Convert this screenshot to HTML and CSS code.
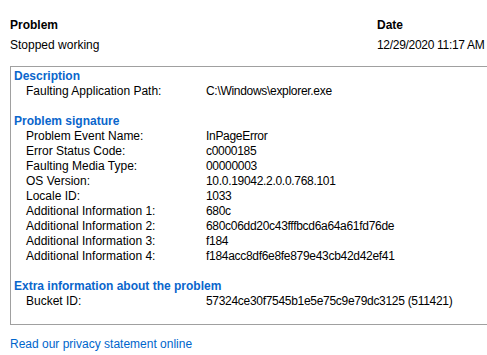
FILE: index.html
```html
<!DOCTYPE html>
<html lang="en">
<head>
    <meta charset="UTF-8">
    <title>Problem Details</title>
    <link rel="stylesheet" href="styles.css">
</head>
<body>
    <div class="summary">
        <div class="summary-col problem-col">
            <div class="col-head">Problem</div>
            <div>Stopped working</div>
        </div>
        <div class="summary-col">
            <div class="col-head">Date</div>
            <div class="value">12/29/2020 11:17 AM</div>
        </div>
    </div>

    <div class="details">
        <div class="section">
            <div class="section-title">Description</div>
            <div class="row"><span class="label">Faulting Application Path:</span><span class="value">C:\Windows\explorer.exe</span></div>
        </div>

        <div class="section">
            <div class="section-title">Problem signature</div>
            <div class="row"><span class="label">Problem Event Name:</span><span class="value">InPageError</span></div>
            <div class="row"><span class="label">Error Status Code:</span><span class="value">c0000185</span></div>
            <div class="row"><span class="label">Faulting Media Type:</span><span class="value">00000003</span></div>
            <div class="row"><span class="label">OS Version:</span><span class="value">10.0.19042.2.0.0.768.101</span></div>
            <div class="row"><span class="label">Locale ID:</span><span class="value">1033</span></div>
            <div class="row"><span class="label">Additional Information 1:</span><span class="value">680c</span></div>
            <div class="row"><span class="label">Additional Information 2:</span><span class="value">680c06dd20c43fffbcd6a64a61fd76de</span></div>
            <div class="row"><span class="label">Additional Information 3:</span><span class="value">f184</span></div>
            <div class="row"><span class="label">Additional Information 4:</span><span class="value">f184acc8df6e8fe879e43cb42d42ef41</span></div>
        </div>

        <div class="section">
            <div class="section-title">Extra information about the problem</div>
            <div class="row"><span class="label">Bucket ID:</span><span class="value">57324ce30f7545b1e5e75c9e79dc3125 (511421)</span></div>
        </div>
    </div>

    <a class="privacy-link" href="#">Read our privacy statement online</a>
</body>
</html>
```

FILE: styles.css
```css
body {
    font-family: 'Liberation Sans', Arial, sans-serif;
    font-size: 12px;
    color: #000;
    background-color: #fff;
    margin: 0;
    padding: 15px 0 0 10px;
    overflow: hidden;
}

.summary {
    display: flex;
    line-height: 20px;
}

.problem-col {
    width: 367px;
}

.col-head {
    font-weight: bold;
}

.value {
    letter-spacing: -0.3px;
}

.details {
    margin-top: 11px;
    border: 1px solid #a0a0a0;
    border-right: none;
    padding: 2px 0 15px 3px;
    line-height: 15px;
}

.section + .section {
    margin-top: 15px;
}

.section-title {
    font-weight: bold;
    color: #0a66cc;
}

.row {
    display: flex;
    padding-left: 12px;
}

.label {
    width: 180px;
    flex-shrink: 0;
}

.privacy-link {
    display: inline-block;
    margin-top: 12px;
    line-height: 15px;
    color: #0066cc;
    text-decoration: none;
}
```
